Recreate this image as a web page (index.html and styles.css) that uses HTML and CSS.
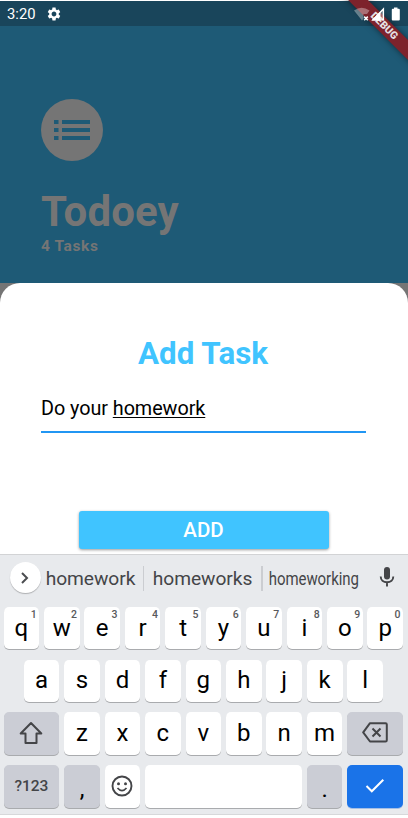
FILE: index.html
```html
<!DOCTYPE html>
<html lang="en">
<head>
<meta charset="utf-8">
<title>Todoey</title>
<link rel="stylesheet" href="styles.css">
</head>
<body>
<div class="phone">
  <div class="status">
    <span class="clock">3:20</span>
    <svg class="gear" viewBox="0 0 24 24"><path fill="#fff" d="M19.14 12.94c.04-.3.06-.61.06-.94 0-.32-.02-.64-.07-.94l2.03-1.58c.18-.14.23-.41.12-.61l-1.92-3.32c-.12-.22-.37-.29-.59-.22l-2.39.96c-.5-.38-1.03-.7-1.62-.94l-.36-2.54c-.04-.24-.24-.41-.48-.41h-3.84c-.24 0-.43.17-.47.41l-.36 2.54c-.59.24-1.13.57-1.62.94l-2.39-.96c-.22-.08-.47 0-.59.22L2.74 8.87c-.12.21-.08.47.12.61l2.03 1.58c-.05.3-.09.63-.09.94s.02.64.07.94l-2.03 1.58c-.18.14-.23.41-.12.61l1.92 3.32c.12.22.37.29.59.22l2.39-.96c.5.38 1.03.7 1.62.94l.36 2.54c.05.24.24.41.48.41h3.84c.24 0 .44-.17.47-.41l.36-2.54c.59-.24 1.13-.56 1.62-.94l2.39.96c.22.08.47 0 .59-.22l1.92-3.32c.12-.22.07-.47-.12-.61l-2.01-1.58zM12 15.6c-1.98 0-3.6-1.62-3.6-3.6s1.62-3.6 3.6-3.6 3.6 1.62 3.6 3.6-1.62 3.6-3.6 3.6z"/></svg>
    <svg class="signals" viewBox="0 0 48 16"><path fill="#fff" fill-opacity=".35" d="M0 4.600Q7.500 -1.200 15.500 4.600L13 8H9.500V12.500L8 14.500Z"/><path stroke="#fff" stroke-width="1.500" d="M10.200 10.600l3.600 3.600m0-3.600l-3.600 3.600"/><path fill="#fff" fill-opacity=".3" d="M30 2V14.500H17.500Z"/><path fill="#fff" d="M26.500 5.500V14.500H17.500Z"/><path fill="none" stroke="#fff" stroke-width="1.400" d="M29.400 3V13.900H19Z"/><path fill="#fff" d="M40 1.500h3.500v1.300h1.300q1 0 1 1v9.700q0 1-1 1h-6q-1 0-1-1v-9.700q0-1 1-1h1.200Z"/></svg>
  </div>
  <div class="ribbon">DEBUG</div>
  <header class="header">
    <div class="avatar"><svg viewBox="0 0 36 20"><path fill="#1e5a76" d="M0 0h4.500v4H0zM8 0h28v4H8zM0 8h4.500v4H0zM8 8h28v4H8zM0 16h4.500v4H0zM8 16h28v4H8z"/></svg></div>
    <h1 class="title">Todoey</h1>
    <div class="count">4 Tasks</div>
  </header>
  <div class="backdrop"><main class="sheet">
    <h2 class="heading">Add Task</h2>
    <div class="field">Do your <span class="composing">homework</span></div>
    <div class="add">ADD</div>
  </main></div>
  <section class="keyboard">
    <div class="suggest">
      <div class="expand"><svg viewBox="0 0 10 14"><path d="M2 2l5 5-5 5" fill="none" stroke="#4b4d50" stroke-width="2"/></svg></div>
      <span class="word first">homework</span>
      <span class="word second">homeworks</span>
      <span class="word third"><span class="squeeze">homeworking</span></span>
      <svg class="mic" viewBox="0 0 16 20"><rect x="5" y="0" width="6" height="12.500" rx="3" fill="#444548"/><path d="M1.700 9.500c0 3.500 2.700 5.700 6.300 5.700s6.300-2.200 6.300-5.700M8 15v4.500" fill="none" stroke="#444548" stroke-width="1.900"/></svg>
    </div>
    <div class="keys">
      <div class="row">
        <div class="key">q<sup>1</sup></div><div class="key">w<sup>2</sup></div><div class="key">e<sup>3</sup></div><div class="key">r<sup>4</sup></div><div class="key">t<sup>5</sup></div><div class="key">y<sup>6</sup></div><div class="key">u<sup>7</sup></div><div class="key">i<sup>8</sup></div><div class="key">o<sup>9</sup></div><div class="key">p<sup>0</sup></div>
      </div>
      <div class="row middle">
        <div class="key">a</div><div class="key">s</div><div class="key">d</div><div class="key">f</div><div class="key">g</div><div class="key">h</div><div class="key">j</div><div class="key">k</div><div class="key">l</div>
      </div>
      <div class="row">
        <div class="key wide grey"><svg width="24" height="24" viewBox="0 0 24 24"><path d="M12 2L1.700 12.500H6.500V22h11v-9.500h4.800Z" fill="none" stroke="#444548" stroke-width="2" stroke-linejoin="round"/></svg></div>
        <div class="key">z</div><div class="key">x</div><div class="key">c</div><div class="key">v</div><div class="key">b</div><div class="key">n</div><div class="key">m</div>
        <div class="key wide grey"><svg class="erase" width="26" height="21" viewBox="0 0 26 21"><path d="M8 1.200H23.500Q24.800 1.200 24.800 2.500V18.200Q24.800 19.500 23.500 19.500H8L1.200 10.400Z" fill="none" stroke="#444548" stroke-width="2" stroke-linejoin="round"/><path d="M10.500 6.500l8 8m0-8l-8 8" stroke="#444548" stroke-width="2"/></svg></div>
      </div>
      <div class="row bottom">
        <div class="key wide grey symbols">?123</div>
        <div class="key grey punct">,</div>
        <div class="key"><svg width="22" height="22" viewBox="0 0 22 22"><circle cx="11" cy="11" r="9.500" fill="none" stroke="#444548" stroke-width="1.900"/><circle cx="7.500" cy="8.800" r="1.500" fill="#444548"/><circle cx="14.500" cy="8.800" r="1.500" fill="#444548"/><path d="M6.500 13Q11 18.300 15.500 13" fill="none" stroke="#444548" stroke-width="1.700"/></svg></div>
        <div class="key space"></div>
        <div class="key grey punct">.</div>
        <div class="key wide done"><svg width="20" height="16" viewBox="0 0 20 16"><path d="M1.500 8l5.300 5.300L18.300 1.700" fill="none" stroke="#fff" stroke-width="2"/></svg></div>
      </div>
    </div>
  </section>
</div>
</body>
</html>
```
FILE: styles.css
```css
* { box-sizing: border-box; }
body { margin: 0; background: #fff; font-family: Roboto, sans-serif; }
svg { display: block; }
.phone { position: relative; width: 408px; height: 818px; padding-top: 1px; overflow: hidden; }
.status { display: flex; align-items: center; height: 25px; padding: 0 6px 0 7px; background: #19455b; color: #fff; }
.clock { padding-top: 1px; font-size: 14.800px; line-height: 24px; }
.gear { width: 16px; height: 16px; margin-left: 10.500px; }
.signals { position: relative; z-index: 2; width: 48px; height: 16px; margin-left: auto; }
.ribbon { position: absolute; left: 323.500px; top: 18.500px; width: 120px; height: 14px; transform: rotate(45deg); background: #7d232c; box-shadow: 0 0 6px rgba(0,0,0,.5); color: #e4dfe0; font-size: 10.500px; font-weight: 900; line-height: 14px; text-align: center; }
.header { height: 257px; padding: 73px 41px 0; background: #1e5a76; color: #757575; }
.avatar { display: flex; align-items: center; justify-content: center; width: 62px; height: 62px; border-radius: 50%; background: #757575; }
.avatar svg { width: 36px; height: 20px; }
.title { margin: 26px 0 0; font-size: 42px; line-height: 49px; font-weight: 700; letter-spacing: .1px; }
.count { margin-top: 1px; font-size: 15.500px; line-height: 18px; font-weight: 700; letter-spacing: .6px; }
.backdrop { background: #757575; }
.sheet { display: flex; flex-direction: column; height: 271px; padding: 51px 41px 0; border-radius: 20px 20px 0 0; background: #fff; }
.heading { margin: 0 2px 0 0; color: #40c4ff; font-size: 31.300px; line-height: 40px; font-weight: 700; text-align: center; }
.field { height: 42px; margin: 17px 1px 0 0; padding-top: 4.500px; border-bottom: 2px solid #2196f3; font-size: 19.800px; line-height: 26px; letter-spacing: -.05px; color: #000; }
.composing { text-decoration: underline; text-decoration-thickness: 1px; text-underline-offset: 2px; text-decoration-skip-ink: none; }
.add { width: 250px; height: 37.500px; margin: 78px auto 0 37.500px; border-radius: 3px; background: #40c4ff; box-shadow: 0 1px 3px rgba(0,0,0,.4); color: #fff; font-size: 20.500px; line-height: 38px; font-weight: 500; text-align: center; }
.keyboard { height: 261px; border-top: 1px solid #d2d3d5; border-bottom: 1px solid #d7d8da; background: #e8eaed; }
.suggest { display: flex; align-items: center; height: 52px; padding: 0 13px 0 9.500px; }
.expand { display: flex; align-items: center; justify-content: center; width: 31.500px; height: 31.500px; margin-top: -7px; border-radius: 50%; background: #fff; box-shadow: 0 1px 1px rgba(0,0,0,.25); }
.expand svg { width: 10px; height: 14px; }
.word { height: 25px; margin-top: -5px; color: #444548; font-size: 19.200px; line-height: 25px; letter-spacing: -.05px; text-align: center; white-space: nowrap; }
.first { width: 102px; padding-right: 3px; }
.second { width: 118px; border-left: 1px solid #cbcdd1; }
.third { display: flex; justify-content: center; width: 105px; padding-right: 2px; border-left: 2px solid #cbcdd1; }
.squeeze { transform: scaleX(.78); }
.mic { width: 16px; height: 20px; margin: -8px 0 0 auto; }
.keys { display: flex; flex-direction: column; gap: 10.200px; padding: 0 4.900px 0 3.500px; }
.row { display: flex; gap: 4.800px; height: 42.400px; }
.middle { padding: 0 20.200px; }
.bottom { height: 43.400px; }
.key { position: relative; display: flex; flex: 1 1 0; align-items: center; justify-content: center; padding-bottom: 1px; border-radius: 5px; background: #fff; box-shadow: 0 1px 0 #a9abae; color: #000; font-size: 24px; line-height: 28px; }
.key sup { position: absolute; top: 3px; right: 2.500px; color: #58595c; font-size: 10.500px; line-height: 10px; font-weight: 500; }
.wide { flex: 0 0 55.900px; }
.grey { background: #cbcdd5; }
.symbols { color: #444548; font-size: 15.500px; font-weight: 500; }
.punct { padding-top: 7px; }
.bottom > .key:not(.wide):not(.space) { flex: 0 0 35.640px; }
.done { background: #1a73e8; box-shadow: 0 1px 0 #a6bfe5; }
```
